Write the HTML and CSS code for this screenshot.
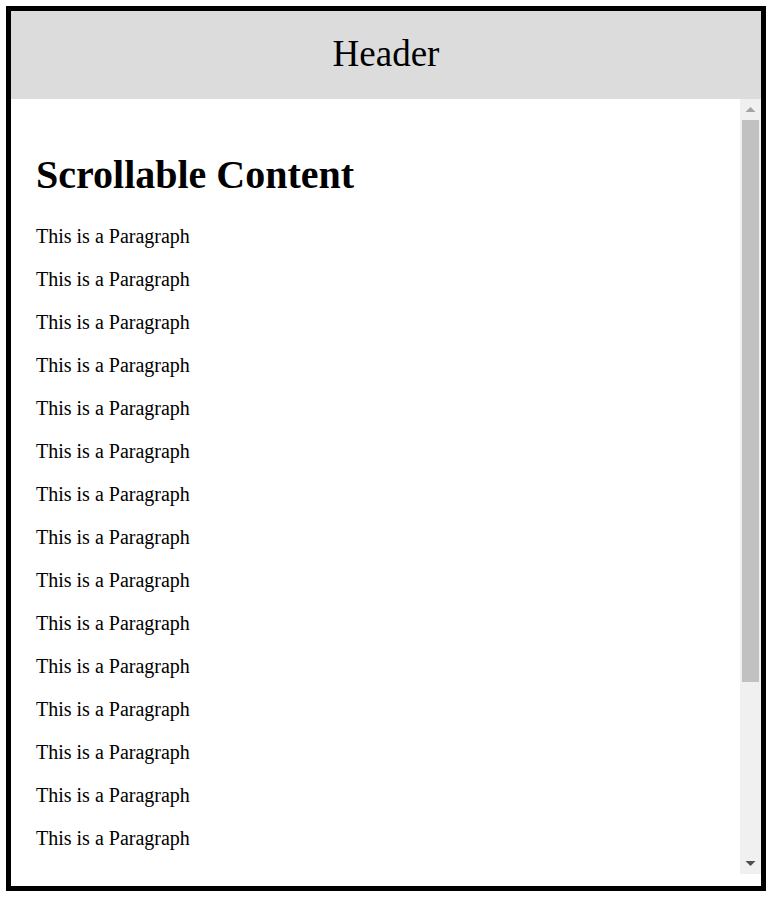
FILE: index.html
```html
<!DOCTYPE html>
<html lang="en">
<head>
<meta charset="utf-8">
<title>Scrollable Content</title>
<link rel="stylesheet" href="styles.css">
</head>
<body>
<div class="frame">
  <div class="box">
    <header class="header">Header</header>
    <div class="pane">
      <main class="content">
        <h1 class="title">Scrollable Content</h1>
        <p class="para">This is a Paragraph</p>
        <p class="para">This is a Paragraph</p>
        <p class="para">This is a Paragraph</p>
        <p class="para">This is a Paragraph</p>
        <p class="para">This is a Paragraph</p>
        <p class="para">This is a Paragraph</p>
        <p class="para">This is a Paragraph</p>
        <p class="para">This is a Paragraph</p>
        <p class="para">This is a Paragraph</p>
        <p class="para">This is a Paragraph</p>
        <p class="para">This is a Paragraph</p>
        <p class="para">This is a Paragraph</p>
        <p class="para">This is a Paragraph</p>
        <p class="para">This is a Paragraph</p>
        <p class="para">This is a Paragraph</p>
        <p class="para">This is a Paragraph</p>
        <p class="para">This is a Paragraph</p>
        <p class="para">This is a Paragraph</p>
        <p class="para">This is a Paragraph</p>
        <p class="para">This is a Paragraph</p>
      </main>
      <div class="scrollbar" aria-hidden="true">
        <div class="sb-btn">
          <svg width="21" height="21" viewBox="0 0 21 21"><path d="M5.5 13 10.5 8 15.5 13z" fill="#a3a3a3"/></svg>
        </div>
        <div class="sb-track">
          <div class="sb-thumb"></div>
        </div>
        <div class="sb-btn">
          <svg width="21" height="21" viewBox="0 0 21 21"><path d="M5.5 8 10.5 13 15.5 8z" fill="#505050"/></svg>
        </div>
      </div>
    </div>
  </div>
</div>
</body>
</html>
```
FILE: styles.css
```css
html, body {
  margin: 0;
  padding: 0;
  background: #ffffff;
}

body {
  font-family: "Liberation Serif", "Times New Roman", serif;
  color: #000;
}

.frame {
  padding: 6px;
}

.box {
  box-sizing: border-box;
  width: 760px;
  height: 885px;
  border: 5px solid #000;
  background: #fff;
  display: flex;
  flex-direction: column;
  padding-bottom: 12px;
}

.header {
  flex: 0 0 88px;
  height: 88px;
  background: #dcdcdc;
  display: flex;
  align-items: center;
  justify-content: center;
  font-size: 37px;
  padding-bottom: 3px;
  box-sizing: border-box;
}

.pane {
  flex: 1 1 auto;
  min-height: 0;
  display: flex;
  flex-direction: row;
}

.content {
  flex: 1 1 auto;
  min-width: 0;
  overflow: hidden;
  padding: 25px;
}

.title {
  font-size: 40px;
  font-weight: bold;
  margin: 26.8px 0;
}

.para {
  font-size: 20px;
  margin: 20px 0;
}

.scrollbar {
  flex: 0 0 21px;
  width: 21px;
  background: #f0f0f0;
  display: flex;
  flex-direction: column;
}

.sb-btn {
  flex: 0 0 21px;
  height: 21px;
}

.sb-btn svg {
  display: block;
}

.sb-track {
  flex: 1 1 auto;
  display: flex;
  flex-direction: column;
}

.sb-thumb {
  height: 562px;
  margin: 0 2px;
  background: #c1c1c1;
}
```
